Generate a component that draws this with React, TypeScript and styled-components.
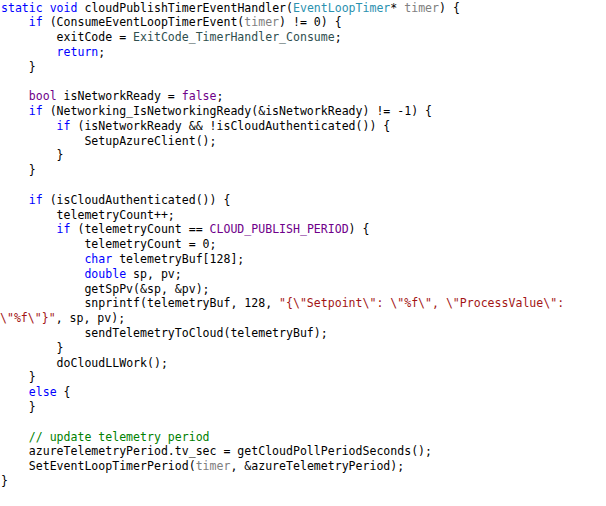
import React from "react";
import styled, { createGlobalStyle } from "styled-components";

const Global = createGlobalStyle`
  html, body { margin: 0; padding: 0; background: #ffffff; }
`;

type Kind = "p" | "kw" | "kw2" | "type" | "param" | "str" | "com" | "macro" | "enum";
type Tok = [Kind, string];

const colors: Record<Kind, string> = {
  p: "#000000",
  kw: "#0000ff",
  kw2: "#6f008a",
  type: "#2b91af",
  param: "#808080",
  str: "#a31515",
  com: "#008000",
  macro: "#6f008a",
  enum: "#2f4f4f",
};

const Code = styled.pre`
  margin: 0;
  padding: 0.5px 0 0 1px;
  width: 590px;
  font-family: "DejaVu Sans Mono", "Liberation Mono", monospace;
  font-size: 11.56px;
  line-height: 14.8px;
  color: #000;
`;

const Line = styled.div<{ $indent: number }>`
  white-space: pre;
  height: 14.8px;
  padding-left: ${(p) => p.$indent * 4}ch;
`;

const Wrapped = styled.div`
  white-space: pre;
  height: 14.8px;
  margin-left: -1px;
`;

const Tk = styled.span<{ $k: Kind }>`
  color: ${(p) => colors[p.$k]};
`;

const P = (s: string): Tok => ["p", s];
const K = (s: string): Tok => ["kw", s];

const lines: { i: number; t: Tok[]; wrap?: boolean }[] = [
  { i: 0, t: [K("static"), P(" "), K("void"), P(" cloudPublishTimerEventHandler("), ["type", "EventLoopTimer"], P("* "), ["param", "timer"], P(") {")] },
  { i: 1, t: [K("if"), P(" (ConsumeEventLoopTimerEvent("), ["param", "timer"], P(") != 0) {")] },
  { i: 2, t: [P("exitCode = "), ["enum", "ExitCode_TimerHandler_Consume"], P(";")] },
  { i: 2, t: [K("return"), P(";")] },
  { i: 1, t: [P("}")] },
  { i: 0, t: [] },
  { i: 1, t: [["kw2", "bool"], P(" isNetworkReady = "), ["kw2", "false"], P(";")] },
  { i: 1, t: [K("if"), P(" (Networking_IsNetworkingReady(&isNetworkReady) != -1) {")] },
  { i: 2, t: [K("if"), P(" (isNetworkReady && !isCloudAuthenticated()) {")] },
  { i: 3, t: [P("SetupAzureClient();")] },
  { i: 2, t: [P("}")] },
  { i: 1, t: [P("}")] },
  { i: 0, t: [] },
  { i: 1, t: [K("if"), P(" (isCloudAuthenticated()) {")] },
  { i: 2, t: [P("telemetryCount++;")] },
  { i: 2, t: [K("if"), P(" (telemetryCount == "), ["macro", "CLOUD_PUBLISH_PERIOD"], P(") {")] },
  { i: 3, t: [P("telemetryCount = 0;")] },
  { i: 3, t: [K("char"), P(" telemetryBuf[128];")] },
  { i: 3, t: [K("double"), P(" sp, pv;")] },
  { i: 3, t: [P("getSpPv(&sp, &pv);")] },
  { i: 3, t: [P("snprintf(telemetryBuf, 128, "), ["str", "\"{\\\"Setpoint\\\": \\\"%f\\\", \\\"ProcessValue\\\":"]] },
  { i: 0, wrap: true, t: [["str", "\\\"%f\\\"}\""], P(", sp, pv);")] },
  { i: 3, t: [P("sendTelemetryToCloud(telemetryBuf);")] },
  { i: 2, t: [P("}")] },
  { i: 2, t: [P("doCloudLLWork();")] },
  { i: 1, t: [P("}")] },
  { i: 1, t: [K("else"), P(" {")] },
  { i: 1, t: [P("}")] },
  { i: 0, t: [] },
  { i: 1, t: [["com", "// update telemetry period"]] },
  { i: 1, t: [P("azureTelemetryPeriod.tv_sec = getCloudPollPeriodSeconds();")] },
  { i: 1, t: [P("SetEventLoopTimerPeriod("), ["param", "timer"], P(", &azureTelemetryPeriod);")] },
  { i: 0, t: [P("}")] },
];

export default function App() {
  return (
    <>
      <Global />
      <Code>
        {lines.map((l, idx) => {
          const toks = l.t.map(([k, s], j) => (
            <Tk key={j} $k={k}>
              {s}
            </Tk>
          ));
          return l.wrap ? (
            <Wrapped key={idx}>{toks}</Wrapped>
          ) : (
            <Line key={idx} $indent={l.i}>
              {toks}
            </Line>
          );
        })}
      </Code>
    </>
  );
}
